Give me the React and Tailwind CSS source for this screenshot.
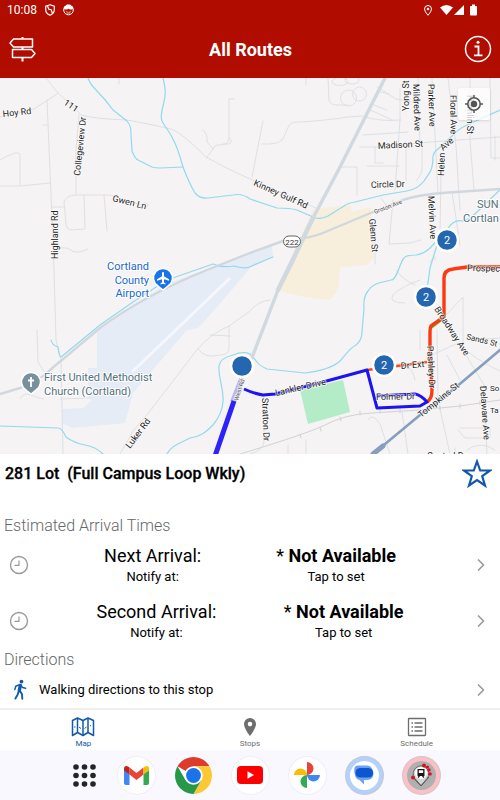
import { useState } from 'react';
import { ChevronRight } from 'lucide-react';

const water = [
  'M88 78C90 84 93 87 97 91S108 103 113 110L127 121C131 126 131 129 131 135L132 151C134 156 136 159 138 160L152 167Q155 168 160 168L183 167',
  'M163 78C166 90 166 94 163 106S161 121 165 126C174 138 178 149 183 167C188 180 192 188 195 193Q200 199 208 198L233 195Q242 193 250 199L277 208Q290 208 297 210L313 217Q320 220 328 216L344 206Q348 203 355 202L383 195L407 191Q418 189 424 181C429 173 432 172 433 160Q432 153 438 149L450 138Q458 129 467 125L500 110',
  'M500 190L483 206Q470 220 463 221Q453 219 447 230L430 248Q424 254 416 255Q406 255 404 258C399 264 397 280 391 280C380 283 373 283 368 291Q363 297 364 308L362 332Q362 340 356 345C350 348 346 354 340 361Q330 370 305 373L267 369Q260 366 257 362T250 354Q243 351 233 355Q220 358 219 366C218 378 224 388 223 402Q222 414 213 425C206 432 200 437 190 438L178 444Q170 448 167 454',
  'M437 245L430 268L427 290',
  'M0 426L58 428Q62 428 66 437Q74 443 85 445T103 454',
  'M51 340Q52 345 58 347Q59 356 61 357L100 325L133 302L167 280L213 264Q222 268 234 266Q246 270 254 265L273 257',
];

const roads = [
  'M46 78L58 93Q75 108 81 115Q96 119 127 120Q150 124 171 129Q181 132 206 157Q225 168 250 179Q270 188 316 208',
  'M0 117L34 109L57 94', 'M47 100L52 218L54 270L56 340L61 360L63 454', 'M43 125H48', 'M0 160Q17 150 20 154L20 185', 'M0 186H20L50 183',
  'M79 115L76 150L76 194', 'M52 207H64', 'M64 202Q66 195 76 195L110 195Q125 200 142 205a3 2 0 1 1 4 2', 'M64 202L66 224Q67 230 72 230L85 229L84 195', 'M104 195L107 231', 'M60 248Q69 247 72 251Q78 254 88 249',
  'M37 330L38 362L45 373', 'M20 398Q25 392 31 395T44 399', 'M60 399L91 398',
  'M234 99L229 99L229 138Q229 146 216 145L207 157M203 130Q208 134 207 142L213 149M229 138q5 3 0 6l-6 0',
  'M120 454L133 431L150 411L170 385L196 351Q210 334 229 326L250 311Q258 301 270 300', 'M229 326V349Q228 355 220 355Q205 359 198 349M210 335L230 336',
  'M328 78L329 100Q330 105 337 105H348', 'M336 78a8 4 0 1 0 8 0M358 78a7 4 0 1 1-12 0', 'M348 90a8 8 0 1 0 1 0M360 87a7 7 0 1 1-1 0', 'M306 78V85',
  'M263 121L252 177', 'M262 144Q278 145 283 139C290 123 289 122 300 122Q330 120 348 117L362 116Q380 122 401 120', 'M380 92L389 94M374 105L387 110',
  'M377 87L396 99L412 102', 'M370 110Q380 114 392 120', 'M363 135L408 132', 'M360 147H378L430 142L500 137', 'M375 147V163H383M367 166H399', 'M340 167H357V195', 'M406 146V180', 'M422 144V170Q420 178 416 181',
  'M400 88V120L395 190M418 78L420 145M432 78L438 192', 'M448 78L456 146L460 210M470 78V140L474 190M490 78L491 158H500M495 136V160', 'M393 200L389 244L410 243L421 240', 'M381 198L388 208M375 220V264',
  'M441 170L440 235M452 192L460 245', 'M430 262Q437 252 435 260M420 280Q400 287 393 295Q388 303 405 303',
  'M396 270Q403 280 415 285', 'M437 330L438 400L450 454', 'M444 317L463 297V350L487 390', 'M432 355L458 343Q475 360 500 371', 'M415 380Q412 360 390 365M420 330V350',
  'M447 355L460 380M470 340L500 338', 'M264 395V440Q265 450 250 454M288 454V445M306 454V440', 'M368 420Q372 412 380 424L390 454M402 412L408 454',
  'M484 385L487 454', 'M460 428H490V438H465L458 430', 'M455 454V448M467 450Q480 440 495 450', 'M119 78V84',
];

const railTicks = 'M300 434l1 4M320 427l1 4M340 417l1 4M360 411v4M380 409v4M400 409v4M440 406v4M460 404v4M480 401v4';

const streets = [
  { t: 'Hoy Rd', x: 3, y: 117, r: -6 },
  { t: '111', x: 63, y: 104, r: 34 },
  { t: 'Collegeview Dr', x: 80, y: 176, r: -84 },
  { t: 'Gwen Ln', x: 112, y: 201, r: 14 },
  { t: 'Highland Rd', x: 58, y: 259, r: -90 },
  { t: 'Kinney Gulf Rd', x: 253, y: 185, r: 24 },
  { t: 'Circle Dr', x: 371, y: 188, r: -2 },
  { t: 'Madison St', x: 378, y: 149, r: -3 },
  { t: 'Yong St', x: 409, y: 111, r: -90 },
  { t: 'Mildred Ave', x: 413, y: 84, r: 88 },
  { t: 'Parker Ave', x: 428, y: 84, r: 88 },
  { t: 'Floral Ave', x: 450, y: 95, r: 89 },
  { t: 'Hamlin St', x: 467, y: 95, r: 90 },
  { t: 'Helen', x: 444, y: 176, r: -88 },
  { t: 'Ave', x: 443, y: 151, r: -40 },
  { t: 'Melvin Ave', x: 428, y: 196, r: 87 },
  { t: 'Glenn St', x: 369, y: 219, r: 85 },
  { t: 'Luker Rd', x: 130, y: 449, r: -53 },
  { t: 'Stratton Dr', x: 262, y: 398, r: 88 },
  { t: 'Lankler Drive', x: 276, y: 396, r: -13 },
  { t: 'Dr Ext', x: 401, y: 369, r: -5 },
  { t: 'Folmer Dr', x: 376, y: 400, r: -1 },
  { t: 'Pashley Dr', x: 427, y: 346, r: 87 },
  { t: 'Broadway Ave', x: 434, y: 309, r: 57 },
  { t: 'Prospec', x: 467, y: 271, r: 1 },
  { t: 'Sands St', x: 466, y: 339, r: 14, size: 8 },
  { t: 'Delaware Ave', x: 480, y: 386, r: 86 },
  { t: 'Tompkins St', x: 421, y: 418, r: -39 },
  { t: 'So', x: 490, y: 391, r: 0, size: 8 },
  { t: 'Ta', x: 490, y: 413, r: 0, size: 8 },
  { t: 'Central Dr', x: 427, y: 459, r: 0 },
];

const stops = [
  { x: 447, y: 240, label: '2' },
  { x: 426, y: 297, label: '2' },
  { x: 384, y: 365, label: '2' },
  { x: 242, y: 366, label: '' },
];

const RouteMap = () => (
  <svg
    viewBox="0 78 500 376"
    preserveAspectRatio="xMidYMid slice"
    className="block w-full h-full"
    role="img"
    aria-label="Route map"
    fontFamily="Roboto, sans-serif"
  >
    <rect x="0" y="78" width="500" height="376" fill="#f5f3f4" />

    {/* Land areas */}
    <path d="M97 332L133 305L167 284L213 267L250 252L272 245L273 257L250 268L230 292L210 315L198 328L187 330L133 393L125 423L72 428L62 423V409L83 408L92 400L88 395V368H97Z" fill="#e5ecf6" />
    <path d="M230 278L132 372" stroke="#f6f7fd" strokeWidth="3" />
    <path d="M313 209L350 205L352 212L371 207L374 258L366 265L340 267L338 290L330 300L305 297L275 290L290 262Z" fill="#f7efdc" />
    <path d="M300 390L343 380L350 412L308 424Z" fill="#b5ecc8" />

    {/* Roads and water */}
    <g fill="none" strokeLinecap="round" strokeLinejoin="round">
      <g stroke="#d5dce0" strokeWidth="0.8">
        {roads.map((d) => <path key={d} d={d} />)}
      </g>
      <path d="M240 454Q300 436 323 426Q345 414 372 413L420 410L460 406L500 400" stroke="#cfd2d6" strokeWidth="1" />
      <path d={railTicks} stroke="#cfd2d6" strokeWidth="1" />
      <g stroke="#92d9ec" strokeWidth="1.2">
        {water.map((d) => <path key={d} d={d} />)}
      </g>
      <path d="M0 394L20 388Q38 382 50 370L100 328Q145 295 207 270L250 253L283 241L303 238Q315 237 330 230L373 212L403 200Q420 194 457 192L500 189" stroke="#d0d8de" strokeWidth="2.4" />
      <path d="M385 78L340 167L313 218L291 265L278 290L253 355L242 378" stroke="#d0d9e0" strokeWidth="3.4" />
      <path d="M313 218L278 290" stroke="#d0d9e0" strokeWidth="4.4" />
      <path d="M500 350L455 388L420 415L373 454" stroke="#869fbf" strokeWidth="2.6" />
      <path d="M383 446L373 454" stroke="#869fbf" strokeWidth="5" />
    </g>

    {/* Bus routes */}
    <g fill="none" strokeLinejoin="round">
      <path d="M444 317L431 327" stroke="#4fcf30" strokeWidth="4" />
      <path d="M367 370L427 362" stroke="#fb4a20" strokeWidth="2.6" />
      <path d="M500 267L467 267L453 269Q444 270 444 278V317L431 326Q430 328 430 332V345L432 390Q432 399 427 402" stroke="#fb3a10" strokeWidth="3.4" />
      <path d="M242 379L233 402" stroke="#b9b5ef" strokeWidth="6" />
      <path d="M234 401L215 456" stroke="#2c22fa" strokeWidth="5" />
      <path d="M244 389Q255 394 263 395L275 394L323 382L367 370L377 408L420 406L427 402Q421 395 415 394L377 396" stroke="#1c12f4" strokeWidth="3" />
    </g>

    {/* Labels */}
    <g fill="#252525" stroke="#fff" strokeWidth="1.6" strokeOpacity="0.75" paintOrder="stroke" strokeLinejoin="round">
      {streets.map((s) => (
        <text key={s.t} fontSize={s.size || 9} transform={`translate(${s.x} ${s.y}) rotate(${s.r})`}>{s.t}</text>
      ))}
      <text fontSize="6" fill="#444" transform="translate(375 214) rotate(-21)">Groton Ave</text>
      <text fontSize="6" fill="#555" transform="translate(238 401) rotate(-72)">West Rd</text>
    </g>
    <g fontSize="11" stroke="#fff" strokeWidth="2" paintOrder="stroke" strokeLinejoin="round">
      <g fill="#1967d2" textAnchor="end">
        <text x="149" y="270">Cortland</text>
        <text x="149" y="284">County</text>
        <text x="149" y="297">Airport</text>
      </g>
      <g fill="#54707c">
        <text x="44" y="381">First United Methodist</text>
        <text x="44" y="395">Church (Cortland)</text>
        <text x="477" y="208">SUN</text>
        <text x="463" y="222">Cortlan</text>
      </g>
    </g>

    {/* Highway shield */}
    <rect x="283.500" y="236" width="17" height="11" rx="5.500" fill="#fff" stroke="#666" />
    <text x="292" y="244.500" fontSize="8" textAnchor="middle" fill="#333">222</text>

    {/* Places */}
    <path d="M163 290l-5-4a9.500 9.500 0 1 1 10 0z" fill="#1a73e8" stroke="#fff" strokeWidth="1.500" />
    <path d="M163 272c.7 0 1 .6 1 1.300v3l5 3v1.400l-5-1.500v3l1.500 1.200v1l-2.500-.7-2.500.7v-1l1.500-1.200v-3l-5 1.500v-1.400l5-3v-3c0-.7.3-1.300 1-1.300z" fill="#fff" />
    <path d="M31 394l-5-4a9.500 9.500 0 1 1 10 0z" fill="#78909c" stroke="#fff" strokeWidth="1.500" />
    <path d="M31 377v10M28 380.500h6" stroke="#fff" strokeWidth="1.800" fill="none" />

    {/* Stops */}
    {stops.map((s) => (
      <g key={`${s.x}-${s.y}`}>
        <circle cx={s.x} cy={s.y} r="11" fill="#2566b0" stroke="#fff" strokeWidth="2.500" />
        <text x={s.x} y={s.y + 4} fontSize="11" textAnchor="middle" fill="#fff">{s.label}</text>
      </g>
    ))}
  </svg>
);

const StatusBar = () => (
  <div className="flex h-5 items-center justify-between pl-[7px] pr-[22px] text-white">
    <div className="flex items-center gap-2">
      <span className="text-xs">10:08</span>
      <svg width="10" height="12" viewBox="0 0 10 12" fill="none" stroke="currentColor" strokeWidth="1.200">
        <path d="M5 .8L9.300 2.300V5.500Q9.300 9.500 5 11.200Q.7 9.500.7 5.500V2.300Z" />
        <path d="M2.500 2L4 5.500H6L7.500 9.500" />
      </svg>
      <svg width="11" height="12" viewBox="0 0 11 12">
        <circle cx="5.500" cy="6" r="4.800" fill="none" stroke="currentColor" />
        <path d="M1 5Q0 2 2.500 2Q3 .3 5.500.7Q8-.2 8.500 2Q11 2 10 5Q7 6.200 5.500 4.800Q4 6.200 1 5Z" fill="currentColor" />
        <path d="M3.500 7.500h.8M6.700 7.500h.8M3.500 9h4" stroke="currentColor" strokeWidth=".8" />
      </svg>
    </div>
    <div className="flex items-center">
      <svg className="mr-2" width="8" height="11" viewBox="0 0 8 11" fill="none" stroke="currentColor">
        <path d="M4 10.300Q.5 6.500.5 4a3.500 3.500 0 0 1 7 0Q7.500 6.500 4 10.300Z" />
        <circle cx="4" cy="4" r="1.300" fill="currentColor" stroke="none" />
      </svg>
      <svg width="38" height="12" viewBox="0 0 38 12" fill="currentColor">
        <path d="M0 3.500Q6.500-1.500 13 3.500L6.500 11Z" />
        <path d="M14 11L24 1V11Z" />
        <path d="M30.800 2h1.200V.5h3V2h1.200q.8 0 .8.8v8q0 .7-.8.7h-5.400q-.8 0-.8-.7v-8q0-.8.8-.8Z" />
      </svg>
    </div>
  </div>
);

const Header = () => (
  <header className="bg-[#b00c00]">
    <StatusBar />
    <div className="flex h-[58px] items-center justify-between px-2">
      <button aria-label="Routes" className="text-white">
        <svg width="29" height="27" viewBox="0 0 29 27" fill="none" stroke="currentColor" strokeWidth="1.500" strokeLinejoin="round">
          <path d="M14.500 1V3M14.500 11V13.500M14.500 21.500V25.500" strokeWidth="2" />
          <path d="M5.500 3H24.500V11H5.500L2 7Z" />
          <path d="M23.500 13.500H4.500V21.500H23.500L27 17.500Z" />
        </svg>
      </button>
      <h1 className="pt-[2px] text-lg font-bold text-white">All Routes</h1>
      <button aria-label="Information" className="text-white">
        <svg width="28" height="28" viewBox="0 0 28 28" fill="none" stroke="currentColor">
          <circle cx="14" cy="14" r="12.500" strokeWidth="1.500" />
          <path d="M10.500 11.500H14.500V20M10 20.300H18.500" strokeWidth="1.800" />
          <circle cx="14" cy="7.200" r="1.500" fill="currentColor" stroke="none" />
        </svg>
      </button>
    </div>
  </header>
);

const ClockIcon = () => (
  <svg width="20" height="20" viewBox="0 0 20 20" fill="none" stroke="#9a9a9a">
    <circle cx="10" cy="10" r="8.500" strokeWidth="1.400" />
    <path d="M10 5.500V10.300H5.500" strokeWidth="1.200" />
  </svg>
);

const ArrivalRow = ({ title }) => (
  <button className="flex h-14 w-full items-center px-[9px]">
    <ClockIcon />
    <span className="flex flex-1 justify-evenly">
      <span className="flex flex-col items-center">
        <span className="text-lg leading-6">{title}</span>
        <span className="text-[13px] leading-[18px]">Notify at:</span>
      </span>
      <span className="flex flex-col items-center">
        <span className="text-lg leading-6">* <b className="font-bold">Not Available</b></span>
        <span className="text-[13px] leading-[18px]">Tap to set</span>
      </span>
    </span>
    <ChevronRight size={20} strokeWidth={2} className="text-[#9a9a9a]" />
  </button>
);

const WalkIcon = () => (
  <svg width="21" height="21" viewBox="0 0 21 21" fill="none" stroke="#1259ae" strokeLinecap="round" strokeLinejoin="round">
    <circle cx="12.500" cy="2.600" r="1.900" fill="#1259ae" stroke="none" />
    <path d="M11.300 6.500L10.300 11.500" strokeWidth="3.400" />
    <path d="M10.500 5.600L6.800 7.200L5.800 10.600M12 6.200L13.600 8.600L16.600 9.200" strokeWidth="1.500" />
    <path d="M11 12L13 15.200L13.300 19.800M9.800 12L8.600 15.800L6.400 19.600" strokeWidth="1.900" />
  </svg>
);

const MapIcon = () => (
  <svg width="24" height="20" viewBox="0 0 24 20" fill="none" stroke="currentColor" strokeWidth="1.500" strokeLinejoin="round">
    <path d="M1.500 3.500L6.500 1L12 3.500L17 1L22.500 3.500V18.500L17 15.500L12 18.500L6.500 15.500L1.500 18.500Z" />
    <path d="M6.500 1V15.500M12 3.500V18.500M17 1V15.500" />
    <path d="M3 10h1.500M8 10l2 1.500M13.500 11.500l2-1.500M19 8.500l1 .5" strokeWidth="1" />
  </svg>
);

const PinIcon = () => (
  <svg width="14" height="20" viewBox="0 0 14 20">
    <path fillRule="evenodd" d="M7 1a6 6 0 0 1 6 6C13 11.500 7 19 7 19S1 11.500 1 7A6 6 0 0 1 7 1ZM7 4.800a2.300 2.300 0 1 0 0 4.600a2.300 2.300 0 0 0 0-4.600Z" fill="currentColor" />
  </svg>
);

const ListIcon = () => (
  <svg width="20" height="20" viewBox="0 0 20 20" fill="none" stroke="currentColor" strokeWidth="1.300">
    <rect x="1.500" y="1.500" width="17" height="17" rx=".5" />
    <path d="M7.500 6H15.500M7.500 10H15.500M7.500 14H15.500M4.500 6H6M4.500 10H6M4.500 14H6" />
  </svg>
);

const tabs = [
  { name: 'Map', icon: MapIcon },
  { name: 'Stops', icon: PinIcon },
  { name: 'Schedule', icon: ListIcon },
];

const GmailIcon = () => (
  <svg width="25" height="19" viewBox="0 0 25 19">
    <path d="M0 3V17Q0 19 2 19H5.500V8Z" fill="#4285f4" />
    <path d="M25 3V17Q25 19 23 19H19.500V8Z" fill="#34a853" />
    <path d="M5.500 8.500V1.500L12.500 7L19.500 1.500V8.500L12.500 14Z" fill="#ea4335" />
    <path d="M0 3Q0-1 4 .4L5.500 1.500V8.500L0 4.500Z" fill="#c5221f" />
    <path d="M25 3Q25-1 21 .4L19.500 1.500V8.500L25 4.500Z" fill="#fbbc04" />
  </svg>
);

const ChromeIcon = () => (
  <svg width="37" height="37" viewBox="0 0 37 37">
    <path d="M18.500 18.500L2.500 9.250A18.500 18.500 0 0 1 34.500 9.250H18.500Z" fill="#dd3b2b" />
    <path d="M18.500 9.250H34.500A18.500 18.500 0 0 1 18.500 37L26.500 23.100Z" fill="#fcc934" />
    <path d="M2.500 9.250L10.500 23.100H26.500L18.500 37A18.500 18.500 0 0 1 2.500 9.250Z" fill="#279847" />
    <circle cx="18.500" cy="18.500" r="9.300" fill="#fff" />
    <circle cx="18.500" cy="18.500" r="7.400" fill="#1a73e8" />
  </svg>
);

const YoutubeIcon = () => (
  <svg width="26" height="18" viewBox="0 0 26 18">
    <rect width="26" height="18" rx="4" fill="#f00" />
    <path d="M10.500 5.200L17 9L10.500 12.800Z" fill="#fff" />
  </svg>
);

const PhotosIcon = () => (
  <svg width="26" height="26" viewBox="0 0 26 26">
    <path d="M13 0A6.500 6.500 0 0 1 13 13Z" fill="#ea4335" />
    <path d="M26 13A6.500 6.500 0 0 1 13 13Z" fill="#4285f4" />
    <path d="M13 26A6.500 6.500 0 0 1 13 13Z" fill="#34a853" />
    <path d="M0 13A6.500 6.500 0 0 1 13 13Z" fill="#fbbc04" />
  </svg>
);

const MessagesIcon = () => (
  <svg width="20" height="20" viewBox="0 0 20 20">
    <path d="M4.500.5H13Q17 .5 18 4Q19.500 5.500 19.500 8.500Q19.500 15 13 15H10V19.500L5.500 15Q1 14 .8 9Q-1.500.5 4.500.5Z" fill="#6f9ff5" />
    <path d="M6 3H14.500Q19 3.500 19 8Q19 12.500 14 12.500H6.500Q1.500 12.500 1.500 7.500Q1.500 3.500 6 3Z" fill="#0b57d0" />
  </svg>
);

const TransitIcon = () => (
  <svg width="24" height="24" viewBox="0 0 24 24">
    <path d="M3.500 14L12 23L20 14M14 2L19 7" stroke="#333" strokeWidth=".8" fill="none" />
    <path d="M12 22.500L5.500 15A7.800 7.800 0 1 1 18.500 15Z" fill="#d4d4d4" stroke="#555" strokeWidth=".8" />
    <circle cx="12" cy="10" r="6" fill="#fff" />
    <path fillRule="evenodd" d="M8.500 6H15.500V13H8.500ZM9.800 7.200V10H14.200V7.200Z" fill="#151515" />
    <path d="M9 14.500L10.500 13M15 14.500L13.500 13" stroke="#151515" strokeWidth="1.200" />
    <g fill="#d5121e">
      <circle cx="4" cy="14.500" r="1.900" />
      <circle cx="15" cy="2.500" r="2" />
      <circle cx="18.500" cy="4" r="1.600" />
      <circle cx="20" cy="7" r="1.700" />
      <circle cx="21" cy="11" r="1.800" />
    </g>
  </svg>
);

const AppsIcon = () => (
  <svg width="23" height="23" viewBox="0 0 23 23" fill="#23252d">
    {[3, 11.5, 20].map((y) => [3, 11.5, 20].map((x) => <circle key={`${x}-${y}`} cx={x} cy={y} r="2.800" />))}
  </svg>
);

const dock = [
  { name: 'Gmail', icon: GmailIcon, style: 'bg-white ring-1 ring-[#f0eef5]' },
  { name: 'Chrome', icon: ChromeIcon, style: 'bg-white' },
  { name: 'YouTube', icon: YoutubeIcon, style: 'bg-white ring-1 ring-[#f0eef5]' },
  { name: 'Photos', icon: PhotosIcon, style: 'bg-white ring-1 ring-[#f0eef5]' },
  { name: 'Messages', icon: MessagesIcon, style: 'bg-white border-4 border-[#b3d1fb] ring-1 ring-[#c5c8d0]' },
  { name: 'Transit', icon: TransitIcon, style: 'bg-[#b0b0b0] border-4 border-[#fbc0c6] ring-1 ring-[#d3c5ca]' },
];

const App = () => {
  const [activeTab, setActiveTab] = useState('Map');

  return (
    <div className="flex min-h-screen flex-col bg-white font-['Roboto',sans-serif] text-black">
      <Header />

      <main className="flex flex-1 flex-col">
        <div className="relative min-h-[376px] flex-1 basis-0 overflow-hidden">
          <RouteMap />
          <button aria-label="My location" className="absolute right-[10px] top-[10px] flex h-8 w-8 items-center justify-center rounded-xs bg-white/75 shadow-sm">
            <svg width="18" height="18" viewBox="0 0 18 18" fill="none" stroke="#555" strokeWidth="1.500">
              <circle cx="9" cy="9" r="6.200" />
              <circle cx="9" cy="9" r="3.200" fill="#555" stroke="none" />
              <path d="M9 0V3M9 15V18M0 9H3M15 9H18" />
            </svg>
          </button>
        </div>

        <section>
          <div className="flex h-10 items-center justify-between pl-[5px] pr-2">
            <h2 className="whitespace-pre text-base font-medium [-webkit-text-stroke:0.3px_black]">281 Lot  (Full Campus Loop Wkly)</h2>
            <button aria-label="Add to favorites">
              <svg width="30" height="30" viewBox="0 0 30 30" fill="none" stroke="#1259ae" strokeWidth="2.200">
                <path d="M15 2.500L18.200 11.500H28L20.200 17.200L23 26.500L15 21L7 26.500L9.800 17.200L2 11.500H11.800Z" />
              </svg>
            </button>
          </div>

          <h3 className="mt-[21px] pl-1 text-base font-light leading-[22px] text-[#666]">Estimated Arrival Times</h3>
          <ArrivalRow title="Next Arrival:" />
          <ArrivalRow title="Second Arrival:" />

          <h3 className="pl-1 text-base font-light leading-[22px] text-[#666]">Directions</h3>
          <button className="flex h-[37px] w-full items-center px-[9px]">
            <WalkIcon />
            <span className="flex-1 pl-[9px] text-left text-[13px]">Walking directions to this stop</span>
            <ChevronRight size={20} strokeWidth={2} className="text-[#9a9a9a]" />
          </button>
        </section>
      </main>

      <nav className="grid grid-cols-3 border-t-2 border-[#efefef]">
        {tabs.map((tab) => (
          <button
            key={tab.name}
            onClick={() => setActiveTab(tab.name)}
            className={`flex h-10 flex-col items-center justify-end gap-px ${activeTab === tab.name ? 'text-[#1259ae]' : 'text-[#6e6e6e]'}`}
          >
            <tab.icon />
            <span className="text-[8px] leading-[12px]">{tab.name}</span>
          </button>
        ))}
      </nav>

      <footer className="flex h-[50px] items-center justify-center gap-5 bg-[#faf8ff] pl-[10px]">
        <button aria-label="All apps" className="flex w-[27px] justify-center">
          <AppsIcon />
        </button>
        {dock.map((app) => (
          <button
            key={app.name}
            aria-label={app.name}
            className={`flex h-[37px] w-[37px] items-center justify-center rounded-full ${app.style}`}
          >
            <app.icon />
          </button>
        ))}
      </footer>
    </div>
  );
};

export default App;
